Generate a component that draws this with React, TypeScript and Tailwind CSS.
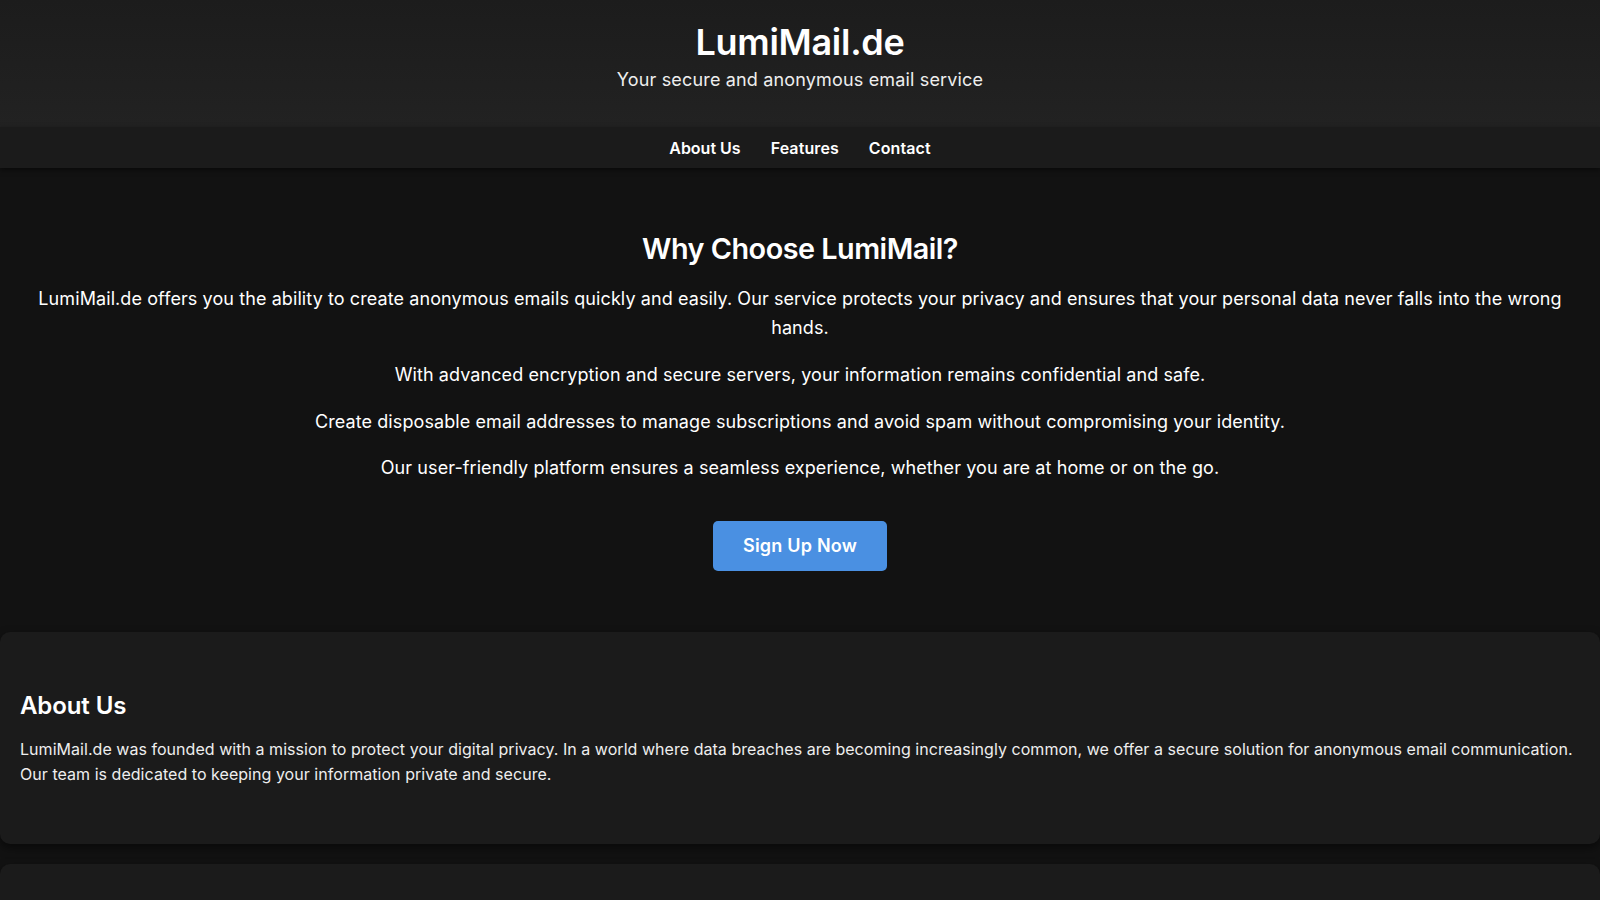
import React from "react";

export default function App() {
  const font = { fontFamily: "Inter, 'Noto Sans', sans-serif" };
  return (
    <div className="min-h-screen bg-[#121212] text-white" style={font}>
      <header className="bg-gradient-to-b from-[#1c1c1c] to-[#222222] pt-[21px] pb-[37px] text-center">
        <h1 className="text-[36px] font-semibold leading-[1.21] m-0 tracking-[-0.28px]">LumiMail.de</h1>
        <p className="text-[18px] leading-[1.21] mt-[4px] text-[#eeeeee] tracking-[0.16px]">Your secure and anonymous email service</p>
      </header>
      <nav className="bg-[#1b1b1b] h-[41px] flex items-center justify-center shadow-[0_2px_5px_rgba(0,0,0,0.5)] relative">
        <a className="mx-[15px] text-[16px] font-semibold text-white">About Us</a>
        <a className="mx-[15px] text-[16px] font-semibold text-white tracking-[0.1px]">Features</a>
        <a className="mx-[15px] text-[16px] font-semibold text-white tracking-[0.1px]">Contact</a>
      </nav>
      <section className="px-[20px] pt-[64px] pb-[61px] text-center">
        <h2 className="text-[28.8px] font-semibold leading-[1.2] mb-[18px] tracking-[-0.5px]">Why Choose LumiMail?</h2>
        <div className="flex flex-col text-[18px] leading-[1.6] tracking-[0.09px]">
          <p className="mb-[19px]">LumiMail.de offers you the ability to create anonymous emails quickly and easily. Our service protects your privacy and ensures that your personal data never falls into the wrong hands.</p>
          <p className="mb-[17.5px]">With advanced encryption and secure servers, your information remains confidential and safe.</p>
          <p className="mb-[17.5px]">Create disposable email addresses to manage subscriptions and avoid spam without compromising your identity.</p>
          <p>Our user-friendly platform ensures a seamless experience, whether you are at home or on the go.</p>
        </div>
        <div className="mt-[38px] flex justify-center">
          <button className="h-[50px] px-[30px] rounded-[5px] bg-[#4a90e2] text-white text-[18px] font-semibold tracking-[0.2px]">Sign Up Now</button>
        </div>
      </section>
      <section className="bg-[#1b1b1b] rounded-[10px] shadow-[0_4px_10px_rgba(0,0,0,0.5)] px-[20px] pt-[60px] pb-[56px]">
        <h2 className="text-[24px] font-semibold leading-[1.2] mb-[16px] tracking-[-0.1px]">About Us</h2>
        <p className="text-[16px] leading-[1.6] text-[#eeeeee] tracking-[0.04px]">LumiMail.de was founded with a mission to protect your digital privacy. In a world where data breaches are becoming increasingly common, we offer a secure solution for anonymous email communication. Our team is dedicated to keeping your information private and secure.</p>
      </section>
      <section className="mt-[20px] bg-[#1b1b1b] rounded-[10px] shadow-[0_4px_10px_rgba(0,0,0,0.5)] px-[20px] pt-[60px] pb-[56px]">
        <h2 className="text-[24px] font-semibold leading-[1.2] mb-[16px] tracking-[-0.1px]">Features</h2>
        <p className="text-[16px] leading-[1.6] text-[#eeeeee]">Anonymous email creation, strong encryption, disposable addresses and spam protection.</p>
      </section>
    </div>
  );
}
